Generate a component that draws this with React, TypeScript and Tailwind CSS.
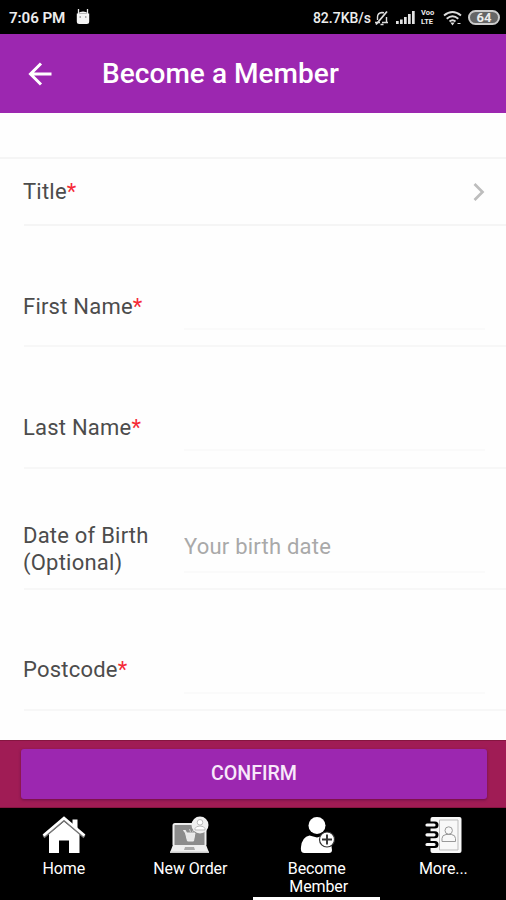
import { useState } from "react";
import type { ReactNode } from "react";
import clsx from "clsx";

function AndroidIcon() {
  return (
    <svg width="14" height="18" viewBox="0 0 14 18" className="mb-[2px] ml-[10px]">
      <path d="M2.500 1v5M11.500 1v5" stroke="#e8e8e8" strokeWidth="1.300" />
      <path d="M.8 5.500h12.400v8a2.500 2.500 0 0 1-2.500 2.500H3.300a2.500 2.500 0 0 1-2.500-2.500z" fill="#f4f4f4" />
      <path d="M1.500 5.600Q7 1.500 12.500 5.600z" fill="#f4f4f4" />
      <circle cx="4.200" cy="9" r=".8" fill="#777" />
      <circle cx="9.800" cy="9" r=".8" fill="#777" />
    </svg>
  );
}

function MutedBellIcon() {
  return (
    <svg width="18" height="16" viewBox="0 0 18 16" fill="none" stroke="#ddd" strokeWidth="1.400" className="ml-[2px]">
      <path d="M2 12.500h5M9 12.500h6M4.500 10V7q0-4 4.500-4.500l2 .2M13.500 7v5.500M7.500 14.500h3" />
      <path d="M3 14.500 14 1.500" strokeWidth="1.800" />
    </svg>
  );
}

function SignalIcon() {
  return (
    <svg width="19" height="13" viewBox="0 0 19 13" fill="#e2e2e2" className="ml-[5px]">
      <path d="M0 10h2.700v3H0zM4 8.500h2.700V13H4zM8 6h2.700v7H8zM12 3h2.700v10H12zM16 0h2.700v13H16z" />
    </svg>
  );
}

function WifiIcon() {
  return (
    <svg width="20" height="16" viewBox="0 0 20 16" fill="none" stroke="#ddd" strokeWidth="1.900" className="ml-[5px]">
      <path d="M1 5.500Q9.500-1.500 18 5.500M3.700 8.700q5.800-4.800 11.600 0M6.500 11.500q3-2.500 6 0" />
      <path d="M8.500 13h2l-1 1.500zM14.500 13.500h3" fill="#ddd" strokeWidth="1.200" />
    </svg>
  );
}

function StatusBar() {
  return (
    <div className="flex h-[34px] items-center bg-black pl-[9px] pr-[6px] pt-[1px] text-[#ededed]">
      <span className="w-[57px] whitespace-nowrap pt-[2px] text-[15.200px] font-semibold leading-none tracking-[-0.100px]">7:06 PM</span>
      <AndroidIcon />
      <span className="ml-auto whitespace-nowrap text-[14px] font-medium leading-none">82.7KB/s</span>
      <MutedBellIcon />
      <SignalIcon />
      <span className="ml-[6px] flex w-[17px] flex-col gap-[1px] text-[7.500px] font-bold leading-[8px]">
        <span>Voo</span>
        <span>LTE</span>
      </span>
      <WifiIcon />
      <span className="ml-[5px] flex h-[15px] w-[32px] items-center justify-center rounded-full border-2 border-[#ccc] bg-[#666] text-[13px] font-bold leading-none">64</span>
    </div>
  );
}

function Header() {
  return (
    <header className="flex h-[79px] items-center bg-[#9c27b0] pl-[28px]">
      <svg width="24" height="24" viewBox="0 0 24 24" fill="none" stroke="#fff" strokeWidth="3">
        <path d="M23.500 12H3M13 1.500 2.500 12 13 22.500" />
      </svg>
      <h1 className="ml-[50px] whitespace-nowrap text-[28px] font-medium leading-none tracking-[0.050px] text-white">Become a Member</h1>
    </header>
  );
}

type FieldProps = {
  label: ReactNode;
  required?: boolean;
  placeholder?: string;
};

function Field({ label, required, placeholder }: FieldProps) {
  const [value, setValue] = useState("");

  return (
    <div className="ml-6 flex h-[121.300px] border-b-2 border-[#f7f7f7] pr-[21px]">
      <label className="-ml-px mt-[40px] flex h-[80px] w-[161px] shrink-0 items-center text-[22px] leading-[27px] tracking-[0.220px] text-[#4c4c4c]">
        <span>
          {label}
          {required ? <span className="text-[#f52b38]">*</span> : null}
        </span>
      </label>
      <input
        value={value}
        onChange={(event) => setValue(event.target.value)}
        placeholder={placeholder}
        className="mt-[53px] h-[51px] min-w-0 flex-1 border-b-2 border-[#fafafa] bg-transparent text-[22px] tracking-[0.220px] outline-none placeholder:text-[#a9a9a9]"
      />
    </div>
  );
}

function HomeIcon() {
  return (
    <svg width="44" height="38" viewBox="0 0 44 38" fill="#fff">
      <path d="M30.500 3.500h5v11l-5-4.500z" />
      <path d="M22 5.500 37.500 18v19H27V24.500H17V37H7V18z" />
      <path d="M1.500 21 22 3.500 42.500 21" fill="none" stroke="#777" strokeWidth="3" />
      <path d="M1.500 19.500 22 2l20.500 17.500" fill="none" stroke="#fff" strokeWidth="2.800" />
    </svg>
  );
}

function OrderIcon() {
  return (
    <svg width="40" height="38" viewBox="0 0 40 38">
      <rect x="3.500" y="8" width="32" height="22" rx="1.500" fill="#8c8c8c" stroke="#eee" strokeWidth="2" />
      <path d="M13.500 14.500h2l1 2.500h8.500l-1.500 8h-6L15.500 17z" fill="#e8e8e8" stroke="#eee" />
      <path d="m19.500 13 1 3M23.500 14l-1 2" stroke="#ccc" />
      <path d="M2.500 30h34l2.500 6.500H0z" fill="#efefef" />
      <path d="M0 35.500h39V37H0z" fill="#ccc" />
      <path d="M15 31h9l1 3H14z" fill="#aaa" />
      <circle cx="30" cy="9" r="8.500" fill="#f0f0f0" />
      <circle cx="30" cy="6.300" r="2.800" fill="#fff" stroke="#bbb" />
      <path d="M25 14v-1.500q1-2.500 5-2.500t5 2.500V14z" fill="#fff" stroke="#bbb" />
    </svg>
  );
}

function MemberIcon() {
  return (
    <svg width="36" height="38" viewBox="0 0 36 38">
      <circle cx="18" cy="9.500" r="8.500" fill="#fff" />
      <path d="M5 37Q1 36.500 2 31q1-10 8.500-11.500l7.500 2 7.500-2Q32 22 33 34q0 3-3 3z" fill="#fff" />
      <circle cx="28" cy="23.500" r="7.500" fill="#fff" stroke="#333" strokeWidth="1.200" />
      <path d="M28 18.500v10M23 23.500h10" stroke="#333" strokeWidth="1.900" />
    </svg>
  );
}

function ContactsIcon() {
  return (
    <svg width="38" height="38" viewBox="0 0 38 38">
      <rect x="6.500" y="1" width="31" height="36" rx="2" fill="#f8f8f8" />
      <g strokeLinecap="round">
        <path d="M6 9h5M6 18.800h5M6 28.500h5" stroke="#000" strokeWidth="7" />
        <path d="M3 9h7M3 18.800h7M3 28.500h7" stroke="#f8f8f8" strokeWidth="3.200" />
      </g>
      <path d="M15.500 4h18.500v30H15.500z" fill="none" stroke="#bbb" strokeWidth="1" />
      <circle cx="24.700" cy="14.500" r="3.700" fill="none" stroke="#999" />
      <path d="M18 25.500v-3q0-3.500 4-4h5.500q4 .5 4 4v3z" fill="none" stroke="#999" />
    </svg>
  );
}

const tabs = [
  { label: "Home", icon: <HomeIcon /> },
  { label: "New Order", icon: <OrderIcon /> },
  { label: "Become Member", icon: <MemberIcon /> },
  { label: "More...", icon: <ContactsIcon /> },
];

function BottomNav() {
  const [active, setActive] = useState(2);

  return (
    <nav className="grid h-[92px] grid-cols-4 bg-black">
      {tabs.map((tab, index) => (
        <button
          key={tab.label}
          onClick={() => setActive(index)}
          className={clsx(
            "flex flex-col items-center border-b-[3px] pl-px pt-[8px] text-[16px] leading-[18px] tracking-[-0.120px] text-white",
            active === index ? "border-white" : "border-transparent",
          )}
        >
          {tab.icon}
          <span className="mt-[6px] whitespace-nowrap">
            {tab.label === "Become Member" ? <>Become<br />&nbsp;Member</> : tab.label}
          </span>
        </button>
      ))}
    </nav>
  );
}

export default function App() {
  return (
    <div className="flex h-[900px] w-[506px] flex-col overflow-hidden bg-white font-[Roboto,sans-serif]">
      <StatusBar />
      <Header />
      <main className="min-h-0 flex-1 overflow-hidden bg-[#fefefe]">
        <div className="h-[46px] border-b-2 border-[#f5f5f5]" />
        <div className="ml-6 flex h-[67px] items-center justify-between border-b-2 border-[#f5f5f5] pr-[21px]">
          <span className="-ml-px text-[22px] leading-[27px] tracking-[0.220px] text-[#4c4c4c]">
            Title<span className="text-[#f52b38]">*</span>
          </span>
          <svg width="12" height="20" viewBox="0 0 12 20" fill="none" stroke="#bdbdbd" strokeWidth="2.700">
            <path d="m1.500 2 8 8-8 8" />
          </svg>
        </div>
        <Field label="First Name" required />
        <Field label="Last Name" required />
        <Field label={<>Date of Birth<br />(Optional)</>} placeholder="Your birth date" />
        <Field label="Postcode" required />
      </main>
      <div className="h-[68px] border-y border-[#851640] bg-[#a01c55] pl-[21px] pr-[19px] pt-[8px]">
        <button className="h-[50px] w-full rounded-[3px] bg-[#9c27b0] text-[19.600px] font-medium text-[#f8e9fa] shadow-[0_1px_3px_rgba(60,0,60,0.500)]">CONFIRM</button>
      </div>
      <BottomNav />
    </div>
  );
}
